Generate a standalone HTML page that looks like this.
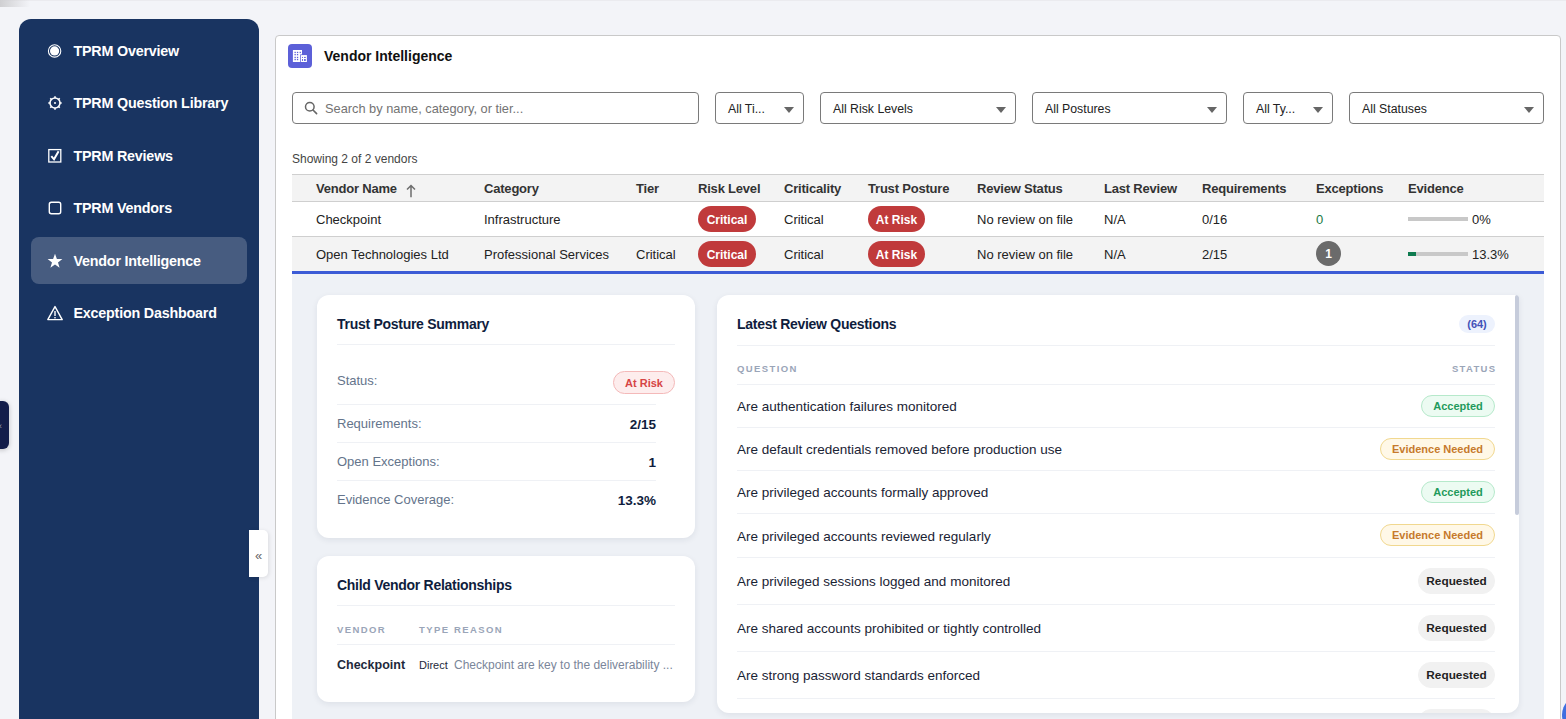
<!DOCTYPE html>
<html><head><meta charset="utf-8">
<style>
*{box-sizing:border-box;}
html,body{margin:0;padding:0;}
body{width:1566px;height:719px;overflow:hidden;position:relative;background:#f3f4f8;font-family:"Liberation Sans",sans-serif;color:#222;}
.abs{position:absolute;}
/* sidebar */
#side{left:19px;top:19px;width:240px;height:740px;background:#193461;border-radius:12px;}
.nav{position:absolute;left:12px;width:216px;height:47px;border-radius:8px;color:#fff;font-weight:700;font-size:14.3px;letter-spacing:-0.2px;}
.nav.active{background:rgba(255,255,255,0.2);}
.nav .ic{position:absolute;left:15.5px;top:15.5px;width:16px;height:16px;}
.nav .tx{position:absolute;left:42.5px;top:0.8px;line-height:47px;white-space:nowrap;}
/* main card */
#card{left:275px;top:35px;width:1286px;height:700px;background:#fff;border:1px solid #c9c9c9;border-radius:4px;}
.hdricon{left:288px;top:44px;width:24px;height:24px;background:#5c60d8;border-radius:4px;}
.title{left:324px;top:46px;font-size:14px;font-weight:700;color:#111;line-height:20px;white-space:nowrap;}
.inp{top:92px;height:32px;border:1px solid #7a7a7a;border-radius:4px;background:#fff;}
.sel .t{position:absolute;left:12px;top:1px;line-height:30px;font-size:12.3px;color:#222;white-space:nowrap;}
.sel .tri{position:absolute;right:9.5px;top:13.5px;width:0;height:0;border-left:5px solid transparent;border-right:5px solid transparent;border-top:6px solid #666;}
.showing{left:292px;top:151px;font-size:12px;color:#444;line-height:16px;white-space:nowrap;}
/* table */
.thead{left:292px;top:174px;width:1252px;height:28px;background:#f3f3f3;border-top:1px solid #cfcfcf;border-bottom:1px solid #cfcfcf;}
.row1{left:292px;top:202px;width:1252px;height:35px;background:#fff;border-bottom:1px solid #cfcfcf;}
.row2{left:292px;top:237px;width:1252px;height:34px;background:#f3f3f3;}
.blue{left:292px;top:271px;width:1252px;height:3px;background:#3b5bd6;}
.th{position:absolute;top:0;line-height:27px;font-size:13px;letter-spacing:-0.2px;font-weight:700;color:#333;white-space:nowrap;}
.td{position:absolute;top:0.7px;line-height:34px;font-size:13px;color:#222;white-space:nowrap;}
.rbadge{position:absolute;height:26px;line-height:28px;border-radius:13px;background:#c03a3b;color:#fff;font-size:12px;font-weight:700;text-align:center;}
/* detail */
.detail{left:292px;top:274px;width:1252px;height:460px;background:#eef1f6;}
.dcard{position:absolute;background:#fff;border-radius:12px;box-shadow:0 2px 6px rgba(30,40,70,0.08);}
.ctitle{position:absolute;left:20px;margin-top:0.2px;font-size:14px;letter-spacing:-0.28px;font-weight:700;color:#0f1d3d;white-space:nowrap;line-height:18px;}
.hr{position:absolute;height:1px;background:#eff1f5;}
.lbl{position:absolute;left:20px;font-size:13px;color:#64748b;white-space:nowrap;line-height:18px;}
.val{position:absolute;right:39px;margin-top:0.7px;font-size:13.5px;font-weight:700;color:#0f1d3d;white-space:nowrap;line-height:18px;text-align:right;}
.cap{position:absolute;font-size:9.5px;font-weight:700;color:#9aa5b8;letter-spacing:1.4px;white-space:nowrap;line-height:12px;}
.q{position:absolute;left:20px;margin-top:1px;font-size:13.5px;color:#1a2334;white-space:nowrap;line-height:18px;}
.pill{position:absolute;right:24px;height:22px;line-height:20px;border-radius:11px;font-size:11px;font-weight:700;text-align:center;border:1px solid;white-space:nowrap;}
.acc{background:#ecfbf2;border-color:#b6e9cb;color:#1f9a5c;width:74px;}
.evn{background:#fff8e7;border-color:#f1d88f;color:#c67a2c;width:115px;}
.req{background:#f1f1f1;border-color:#f1f1f1;color:#222;width:77px;height:26px;line-height:24px;border-radius:13px;font-size:11.8px;}
</style></head>
<body>
<div class="abs" style="left:0;top:0;width:1566px;height:1px;background:#ebebef;"></div>
<div class="abs" style="left:0;top:0;width:30px;height:7px;background:linear-gradient(90deg,#cfcfd2,rgba(243,244,248,0));"></div>
<!-- left tiny tab -->
<div class="abs" style="left:-6px;top:401px;width:15px;height:48px;background:#131d4a;border-radius:6px;box-shadow:0 1px 5px rgba(0,0,0,0.22);"><span class="abs" style="left:3px;top:20px;font-size:9px;color:#9aa0b8;line-height:10px;">&#171;</span></div>

<div id="side" class="abs">
  <div class="nav" style="top:8px;">
    <svg class="ic" viewBox="0 0 16 16"><circle cx="7.6" cy="7.9" r="6.2" fill="none" stroke="#fff" stroke-width="1.1"/><circle cx="7.6" cy="7.9" r="4.6" fill="#fff"/></svg>
    <span class="tx">TPRM Overview</span></div>
  <div class="nav" style="top:60px;">
    <svg class="ic" viewBox="0 0 16 16"><circle cx="8" cy="8" r="5" fill="none" stroke="#fff" stroke-width="1.6"/><circle cx="8" cy="8" r="1" fill="#fff"/>
    <g stroke="#fff" stroke-width="1.6"><line x1="8" y1="1.3" x2="8" y2="3"/><line x1="8" y1="13" x2="8" y2="14.7"/><line x1="1.3" y1="8" x2="3" y2="8"/><line x1="13" y1="8" x2="14.7" y2="8"/><line x1="3.3" y1="3.3" x2="4.4" y2="4.4"/><line x1="11.6" y1="11.6" x2="12.7" y2="12.7"/><line x1="3.3" y1="12.7" x2="4.4" y2="11.6"/><line x1="11.6" y1="4.4" x2="12.7" y2="3.3"/></g></svg>
    <span class="tx">TPRM Question Library</span></div>
  <div class="nav" style="top:113px;">
    <svg class="ic" viewBox="0 0 16 16"><rect x="1.8" y="1.6" width="12" height="12.4" fill="none" stroke="#fff" stroke-width="1.3"/><path d="M4.3 8.2 L7 11.3 L11.6 3.2" fill="none" stroke="#fff" stroke-width="2"/></svg>
    <span class="tx">TPRM Reviews</span></div>
  <div class="nav" style="top:165px;">
    <svg class="ic" viewBox="0 0 16 16"><rect x="2.3" y="2.3" width="11.4" height="11.4" rx="2" fill="none" stroke="#fff" stroke-width="1.4"/></svg>
    <span class="tx">TPRM Vendors</span></div>
  <div class="nav active" style="top:218px;">
    <svg class="ic" viewBox="0 0 16 16"><path d="M8 0.8 L9.9 5.9 L15.4 6 L11 9.4 L12.6 14.7 L8 11.6 L3.4 14.7 L5 9.4 L0.6 6 L6.1 5.9 Z" fill="#fff"/></svg>
    <span class="tx">Vendor Intelligence</span></div>
  <div class="nav" style="top:270px;">
    <svg class="ic" viewBox="0 0 16 16"><path d="M8 1.6 L15.2 14.6 L0.8 14.6 Z" fill="none" stroke="#fff" stroke-width="1.4" stroke-linejoin="round"/><rect x="7.3" y="6" width="1.4" height="5" fill="#fff"/><rect x="7.3" y="12" width="1.4" height="1.4" fill="#fff"/></svg>
    <span class="tx">Exception Dashboard</span></div>
</div>

<div id="card" class="abs"></div>
<div class="abs hdricon">
  <svg width="24" height="24" viewBox="0 0 24 24"><rect x="4.9" y="6" width="9.1" height="12" fill="#fff"/><rect x="12.2" y="10.4" width="7.4" height="8.3" fill="#5c60d8"/><rect x="12.9" y="11.1" width="6" height="6.9" fill="#fff"/>
  <g fill="#5c60d8"><rect x="6.5" y="7.8" width="1.3" height="1.3"/><rect x="8.9" y="7.8" width="1.3" height="1.3"/><rect x="11.6" y="7.8" width="1.3" height="1.3"/>
  <rect x="6.5" y="10" width="1.3" height="1.3"/><rect x="8.9" y="10" width="1.3" height="1.3"/><rect x="6.5" y="12.8" width="1.3" height="1.3"/><rect x="8.9" y="12.8" width="1.3" height="1.3"/>
  <rect x="6.5" y="14.9" width="1.3" height="1.3"/><rect x="8.9" y="14.9" width="1.3" height="1.3"/>
  <rect x="14" y="12.9" width="1" height="1"/><rect x="16" y="12.9" width="1.8" height="1"/><rect x="14" y="15.1" width="1" height="1.8"/><rect x="16" y="15.1" width="1.8" height="1.8"/></g></svg>
</div>
<div class="abs title">Vendor Intelligence</div>

<div class="abs inp" style="left:292px;width:407px;">
  <svg class="abs" style="left:11px;top:8px;" width="14" height="14" viewBox="0 0 14 14"><circle cx="5.8" cy="5.8" r="4.3" fill="none" stroke="#666" stroke-width="1.5"/><line x1="9" y1="9" x2="12.6" y2="12.6" stroke="#666" stroke-width="1.6" stroke-linecap="round"/></svg>
  <span class="abs" style="left:32px;top:1px;line-height:30px;font-size:12.8px;color:#737373;white-space:nowrap;">Search by name, category, or tier...</span>
</div>
<div class="abs inp sel" style="left:715px;width:89px;"><span class="t">All Ti...</span><span class="tri"></span></div>
<div class="abs inp sel" style="left:820px;width:196px;"><span class="t">All Risk Levels</span><span class="tri"></span></div>
<div class="abs inp sel" style="left:1032px;width:195px;"><span class="t">All Postures</span><span class="tri"></span></div>
<div class="abs inp sel" style="left:1243px;width:90px;"><span class="t">All Ty...</span><span class="tri"></span></div>
<div class="abs inp sel" style="left:1349px;width:195px;"><span class="t">All Statuses</span><span class="tri"></span></div>

<div class="abs showing">Showing 2 of 2 vendors</div>

<div class="abs thead">
  <span class="th" style="left:24px;">Vendor Name</span><svg class="abs" style="left:114px;top:9px;" width="10" height="14" viewBox="0 0 10 14"><path d="M5 1.5 V13.2 M1 5.6 L5 1.5 L9 5.6" fill="none" stroke="#6e6e6e" stroke-width="1.5"/></svg>
  <span class="th" style="left:192px;">Category</span>
  <span class="th" style="left:344px;">Tier</span>
  <span class="th" style="left:406px;">Risk Level</span>
  <span class="th" style="left:492px;">Criticality</span>
  <span class="th" style="left:576px;">Trust Posture</span>
  <span class="th" style="left:685px;">Review Status</span>
  <span class="th" style="left:812px;">Last Review</span>
  <span class="th" style="left:910px;">Requirements</span>
  <span class="th" style="left:1024px;">Exceptions</span>
  <span class="th" style="left:1116px;">Evidence</span>
</div>
<div class="abs row1">
  <span class="td" style="left:24px;">Checkpoint</span>
  <span class="td" style="left:192px;">Infrastructure</span>
  <span class="rbadge" style="left:406px;top:4px;width:58px;">Critical</span>
  <span class="td" style="left:492px;">Critical</span>
  <span class="rbadge" style="left:576px;top:4px;width:57px;">At Risk</span>
  <span class="td" style="left:685px;">No review on file</span>
  <span class="td" style="left:812px;">N/A</span>
  <span class="td" style="left:910px;">0/16</span>
  <span class="td" style="left:1024px;color:#1b7a45;">0</span>
  <span class="abs" style="left:1116px;top:15px;width:60px;height:4px;background:#c8c8c8;"></span>
  <span class="td" style="left:1180px;">0%</span>
</div>
<div class="abs row2">
  <span class="td" style="left:24px;">Open Technologies Ltd</span>
  <span class="td" style="left:192px;">Professional Services</span>
  <span class="td" style="left:344px;">Critical</span>
  <span class="rbadge" style="left:406px;top:4px;width:58px;">Critical</span>
  <span class="td" style="left:492px;">Critical</span>
  <span class="rbadge" style="left:576px;top:4px;width:57px;">At Risk</span>
  <span class="td" style="left:685px;">No review on file</span>
  <span class="td" style="left:812px;">N/A</span>
  <span class="td" style="left:910px;">2/15</span>
  <span class="abs" style="left:1024px;top:4px;width:25px;height:25px;border-radius:50%;background:#6b6b6b;color:#fff;font-size:12px;font-weight:700;text-align:center;line-height:27px;">1</span>
  <span class="abs" style="left:1116px;top:15px;width:60px;height:4px;background:#c8c8c8;"><span class="abs" style="left:0;top:0;width:8px;height:4px;background:#0e7a4f;"></span></span>
  <span class="td" style="left:1180px;">13.3%</span>
</div>
<div class="abs blue"></div>

<div class="abs detail">
  <!-- trust posture summary -->
  <div class="dcard" style="left:25px;top:21px;width:378px;height:243px;">
    <span class="ctitle" style="top:20px;">Trust Posture Summary</span>
    <div class="hr" style="left:20px;top:49px;width:338px;"></div>
    <span class="lbl" style="top:77px;">Status:</span>
    <span class="abs" style="left:296px;top:76px;width:62px;height:23px;border:1px solid #f4b9b9;background:#fdeded;border-radius:12px;color:#d64545;font-size:11px;font-weight:700;text-align:center;line-height:22px;">At Risk</span>
    <div class="hr" style="left:20px;top:109px;width:319px;"></div>
    <span class="lbl" style="top:120px;">Requirements:</span><span class="val" style="top:120px;">2/15</span>
    <div class="hr" style="left:20px;top:147px;width:319px;"></div>
    <span class="lbl" style="top:158px;">Open Exceptions:</span><span class="val" style="top:158px;">1</span>
    <div class="hr" style="left:20px;top:185px;width:319px;"></div>
    <span class="lbl" style="top:196px;">Evidence Coverage:</span><span class="val" style="top:196px;">13.3%</span>
  </div>
  <!-- child vendor -->
  <div class="dcard" style="left:25px;top:282px;width:378px;height:146px;">
    <span class="ctitle" style="top:20px;">Child Vendor Relationships</span>
    <div class="hr" style="left:20px;top:49px;width:338px;"></div>
    <span class="cap" style="left:20px;top:68px;">VENDOR</span>
    <span class="cap" style="left:102px;top:68px;">TYPE</span>
    <span class="cap" style="left:137px;top:68px;">REASON</span>
    <div class="hr" style="left:20px;top:88px;width:338px;"></div>
    <span class="abs" style="left:20px;top:100px;font-size:12.5px;font-weight:700;color:#1e293b;line-height:18px;white-space:nowrap;">Checkpoint</span>
    <span class="abs" style="left:102px;top:101px;font-size:11px;color:#1e293b;line-height:16px;white-space:nowrap;">Direct</span>
    <span class="abs" style="left:137px;top:101px;font-size:12px;color:#7a869a;line-height:16px;white-space:nowrap;">Checkpoint are key to the deliverability ...</span>
  </div>
  <!-- latest review questions -->
  <div class="dcard" style="left:425px;top:21px;width:802px;height:418px;overflow:hidden;border-top-right-radius:3px;">
    <span class="ctitle" style="top:20px;">Latest Review Questions</span>
    <span class="abs" style="right:24px;top:20px;width:36px;height:18px;border-radius:9px;background:#edf2fd;color:#4353b8;font-size:11px;font-weight:700;text-align:center;line-height:19px;">(64)</span>
    <div class="hr" style="left:20px;top:50px;width:758px;"></div>
    <span class="cap" style="left:20px;top:68px;">QUESTION</span>
    <span class="cap" style="right:24px;top:68px;letter-spacing:1.3px;margin-right:-1.3px;">STATUS</span>
    <div class="hr" style="left:20px;top:89px;width:758px;"></div>
    <span class="q" style="top:102px;">Are authentication failures monitored</span>
    <span class="pill acc" style="top:100px;">Accepted</span>
    <div class="hr" style="left:20px;top:132px;width:758px;"></div>
    <span class="q" style="top:145px;">Are default credentials removed before production use</span>
    <span class="pill evn" style="top:143px;">Evidence Needed</span>
    <div class="hr" style="left:20px;top:175px;width:758px;"></div>
    <span class="q" style="top:188px;">Are privileged accounts formally approved</span>
    <span class="pill acc" style="top:186px;">Accepted</span>
    <div class="hr" style="left:20px;top:218px;width:758px;"></div>
    <span class="q" style="top:232px;">Are privileged accounts reviewed regularly</span>
    <span class="pill evn" style="top:229px;">Evidence Needed</span>
    <div class="hr" style="left:20px;top:262px;width:758px;"></div>
    <span class="q" style="top:277px;">Are privileged sessions logged and monitored</span>
    <span class="pill req" style="top:273px;">Requested</span>
    <div class="hr" style="left:20px;top:309px;width:758px;"></div>
    <span class="q" style="top:324px;">Are shared accounts prohibited or tightly controlled</span>
    <span class="pill req" style="top:320px;">Requested</span>
    <div class="hr" style="left:20px;top:356px;width:758px;"></div>
    <span class="q" style="top:371px;">Are strong password standards enforced</span>
    <span class="pill req" style="top:367px;">Requested</span>
    <div class="hr" style="left:20px;top:403px;width:758px;"></div>
    <span class="pill req" style="top:414px;">Requested</span>
    <div class="abs" style="left:798px;top:0px;width:4px;height:220px;background:#c6ccdb;border-radius:2px;"></div>
  </div>
</div>

<!-- collapse button -->
<div class="abs" style="left:249px;top:530px;width:19px;height:47px;background:#fff;border-radius:0 5px 5px 0;box-shadow:1px 1px 4px rgba(0,0,0,0.10);color:#666;font-size:13px;text-align:center;line-height:47px;padding-top:2px;">&#171;</div>

<!-- bottom-right blue circle -->
<div class="abs" style="left:1562px;top:695px;width:40px;height:40px;border-radius:50%;background:#3f6fe0;"></div>
</body></html>
